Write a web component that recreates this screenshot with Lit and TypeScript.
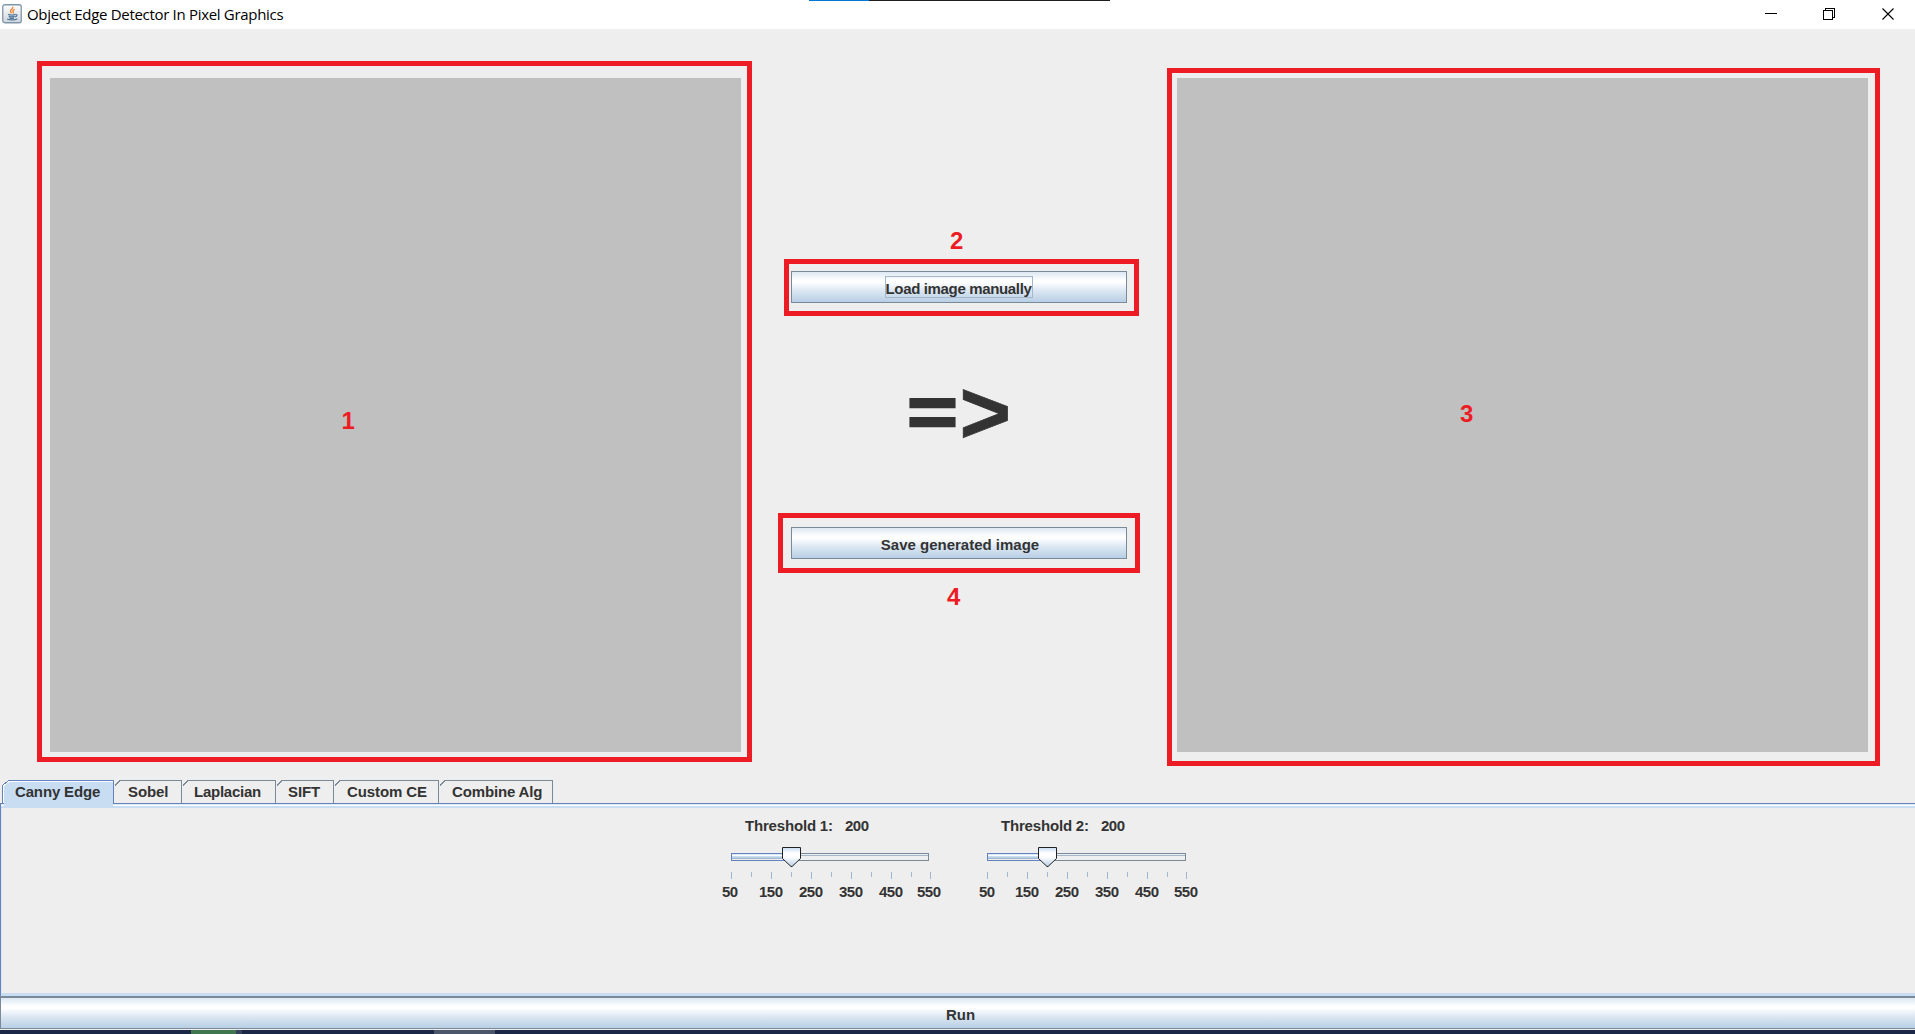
import { LitElement, html, css, svg } from "lit";
import { customElement, property } from "lit/decorators.js";
import { classMap } from "lit/directives/class-map.js";

const MAJOR = [50, 150, 250, 350, 450, 550];

@customElement("threshold-slider")
class ThresholdSlider extends LitElement {
  @property() label = "";
  @property({ type: Number }) value = 200;
  @property({ type: Number }) span = 198;
  @property({ type: Number }) nudge = 0;

  static styles = css`
    :host { display: block; width: 240px; }
    svg { display: block; overflow: visible; }
    text { font: bold 15px "Liberation Sans", Arial, sans-serif; fill: #333; white-space: pre; }
  `;

  render() {
    const x0 = 20;
    const xEnd = x0 + this.span;
    const last = x0 + 199;
    const at = (v: number) => (v === 550 ? last : x0 + ((v - 50) / 100) * 40);
    const labelAt = (v: number) => at(v) + (v === 550 || v === 50 ? this.nudge : 0);
    const t = x0 + 60.5;
    const ticks = Array.from({ length: 11 }, (_, i) => 50 + i * 50);
    return html`
      <svg width="240" height="100" viewBox="0 0 240 100" shape-rendering="crispEdges">
        <defs>
          <linearGradient id="thumb" x1="0" y1="0" x2="0" y2="1">
            <stop offset="0" stop-color="#c8ddf2" />
            <stop offset=".3" stop-color="#fff" />
            <stop offset=".5" stop-color="#fff" />
            <stop offset="1" stop-color="#b8cfe5" />
          </linearGradient>
        </defs>
        <text x="34" y="23" textLength="88">${this.label}:</text>
        <text x="134" y="23" textLength="24">${this.value}</text>
        <rect x="${x0 + 0.5}" y="45.5" width="${this.span - 1}" height="7" fill="#eee" stroke="#7a8a99" />
        <rect x="${x0 + 60}" y="47" width="${xEnd - x0 - 61}" height="1" fill="#a3b8cc" />
        <rect x="${x0 + 0.5}" y="45.5" width="60" height="7" fill="#eee" stroke="#6382bf" />
        <rect x="${x0 + 1}" y="46" width="58" height="1" fill="#dde8f3" />
        <rect x="${x0 + 1}" y="47" width="58" height="1" fill="#fff" />
        <rect x="${x0 + 1}" y="48" width="58" height="1" fill="#c8ddf2" />
        <rect x="${x0 + 1}" y="49" width="58" height="1" fill="#b8cfe5" />
        <rect x="${x0 + 1}" y="50" width="58" height="1" fill="#a3b8cc" />
        <path
          d="M${t - 9} 39.5H${t + 9}V50.500L${t + 0.5} 58.500H${t - 0.5}L${t - 9} 50.500Z"
          fill="url(#thumb)" stroke="#222" shape-rendering="auto" />
        ${ticks.map((v) => svg`<rect x="${at(v)}" y="64" width="1" height="${(v - 50) % 100 ? 5 : 7}" fill="#a3b8cc" />`)}
        ${MAJOR.map((v) => svg`<text x="${labelAt(v)}" y="89" text-anchor="middle" textLength="${v === 50 ? 16 : 24}">${v}</text>`)}
      </svg>
    `;
  }
}

@customElement("app-root")
class AppRoot extends LitElement {
  static styles = css`
    :host {
      display: flex; flex-direction: column; width: 1915px; height: 1034px; overflow: hidden;
      position: relative; background: #eee; color: #333;
      font: bold 15px/18px "Liberation Sans", Arial, sans-serif;
    }
    * { box-sizing: border-box; }
    .title { height: 29px; flex: none; background: #fff; display: flex; align-items: center; padding: 0 20px 2px 2px; color: #000; }
    .title span { font: 15px/20px "Open Sans", "Noto Sans", sans-serif; margin-left: 5px; flex: 1; letter-spacing: -0.31px; white-space: nowrap; }
    .title svg { flex: none; display: block; }
    .title .controls { margin-top: 1px; }
    .peek { position: absolute; top: 0; left: 809px; width: 301px; height: 1px; display: flex; background: #1f1f1f; }
    .peek i { width: 60px; background: #0078d7; }

    .work { height: 751px; flex: none; display: grid; grid-template-columns: 691px 436px 691px; padding: 49px 0 28px 50px; }
    .canvas { position: relative; background: #c0c0c0; }
    .mid { display: flex; flex-direction: column; align-items: center; padding-top: 193px; }
    .slot { position: relative; width: 336px; height: 32px; }
    .btn {
      display: flex; align-items: center; justify-content: center; width: 100%; height: 100%; margin: 0; padding: 3px 0 0 2px;
      border: 1px solid #7a8a99; border-radius: 0; color: #333; font: inherit; white-space: nowrap;
      background: linear-gradient(#dde8f3 0%, #fff 28%, #fff 34%, #dce7f2 62%, #b8cfe5 100%);
    }
    .focus {
      outline: 1px solid #a3b8cc; height: 20px; line-height: 20px; margin-top: -3px; padding-top: 2px; width: 146px;
      letter-spacing: -0.35px; margin-left: -3px;
    }
    .arrow { height: 224px; display: flex; align-items: center; font-size: 92px; line-height: 92px; padding-bottom: 4px; }
    .arrow span { display: block; }
    .eq { transform: translate(0.5px, -2px) scale(0.93, 0.77); -webkit-text-stroke: 3.500px #333; }
    .gt { transform: translate(-0.5px, -1px) scale(0.96, 0.970); -webkit-text-stroke: 0.800px #333; }
    .frame { position: absolute; border: 5px solid #ed1c24; pointer-events: none; }
    .num { position: absolute; color: #ed1c24; font-size: 24px; line-height: 24px; }
    .f1 { left: -13px; top: -17px; width: 715px; height: 701px; }
    .f2 { left: -7px; top: -12px; width: 355px; height: 57px; }
    .f3 { left: -10px; top: -10px; width: 713px; height: 698px; }
    .f4 { left: -13px; top: -14px; width: 362px; height: 60px; }
    .n1 { left: 291.500px; top: 331px; }
    .n2 { left: 159px; top: -42px; }
    .n3 { left: 283px; top: 324px; }
    .n4 { left: 156px; top: 58px; }

    .tabs { height: 23px; flex: none; display: flex; padding-left: 2px; }
    .tab { position: relative; height: 23px; }
    .tab svg { position: absolute; left: 0; top: 0; overflow: visible; }
    .tab span { position: relative; display: block; padding-top: 3px; white-space: nowrap; }
    .tab:first-child { z-index: 1; }

    .panel { flex: 1; min-height: 0; border-left: 1px solid #6382bf; border-top: 1px solid #6382bf; display: flex; flex-direction: column; }
    .lines { height: 4px; flex: none; background: linear-gradient(#dde8f3 1px, #fff 1px 2px, #c8ddf2 2px); }
    .body { flex: 1; border-left: 1px solid #dce6f2; border-bottom: 3px solid #c8ddf2; display: flex; padding-left: 709px; gap: 16px; }
    .run { height: 33px; flex: none; border-top: 2px solid #7a8a99; }
    .run.btn { padding: 3px 0 0 5px; border-right: 0; }
    .edge { height: 1px; flex: none; background: #eee; }
    .taskbar { height: 4px; flex: none; background: #1a2747; display: flex; padding-left: 191px; }
    .green { width: 45px; background: #3f7650; }
    .slate { width: 6px; background: #34405c; }
    .grey { width: 61px; margin-left: 192px; background: #4b556b; }
  `;

  /* name, tab width, text inset, letter spacing */
  private tabs: [string, number, number, number][] = [
    ["Canny Edge", 112, 13, -0.15],
    ["Sobel", 68, 14, -0.1],
    ["Laplacian", 94, 12, -0.25],
    ["SIFT", 58, 12, -0.1],
    ["Custom CE", 105, 13, -0.1],
    ["Combine Alg", 114, 13, -0.15],
  ];

  private tab([name, w, inset, spacing]: [string, number, number, number], i: number) {
    const on = i === 0;
    return html`
      <div class=${classMap({ tab: true, on })} style="width:${w}px">
        <svg width=${w} height="28" shape-rendering="crispEdges">
          ${on
            ? svg`
              <path d="M2 28V5L7 1H${w - 1}V28Z" fill="#c8ddf2" />
              <path d="M1.5 23V6L7 1.5H${w - 1}" fill="none" stroke="#fff" />
              <path d="M.5 23V5.5L6.5 .5H${w - 0.5}V23" fill="none" stroke="#6382bf" />`
            : svg`<path d="M1 5.500L6 .5H${w - 0.5}V23" fill="none" stroke="#7a8a99" />`}
        </svg>
        <span style="padding-left:${inset}px;letter-spacing:${spacing}px">${name}</span>
      </div>
    `;
  }

  render() {
    return html`
      <div class="title">
        <svg width="20" height="20" viewBox="0 0 20 20">
          <defs>
            <linearGradient id="ic" x1="0" y1="0" x2="0" y2="1">
              <stop offset="0" stop-color="#fdfdfd" />
              <stop offset="1" stop-color="#cfd6dc" />
            </linearGradient>
          </defs>
          <rect x=".75" y=".75" width="18.5" height="18" rx="2" fill="url(#ic)" stroke="#7f95a8" stroke-width="1.3" />
          <path d="M10.8 2.8c.8 2-3 2.8-2.300 4.700.2.700.900 1.200 1.100 1.800M12.700 5.300c-2 .800-2.200 1.700-1.500 2.500.4.500.2 1-.2 1.500" fill="none" stroke="#e8842c" stroke-width="1.300" />
          <path d="M6 10.400c2 .7 5.500.7 7.300 0M6.700 12.400c1.900.6 4.100.6 6 0M13.500 10.600c2-.5 2 1.700-.4 2.300M5 15c2.800 1.200 8 1.200 10.500-.3M7.500 14.200c1.400.3 3 .3 4.500 0" fill="none" stroke="#557a9c" stroke-width="1.200" />
        </svg>
        <span>Object Edge Detector In Pixel Graphics</span>
        <svg class="controls" width="130" height="14" viewBox="0 0 130 14" fill="none" stroke="#000" shape-rendering="crispEdges">
          <path d="M0 6.500h12M58.500 3.500h9v9h-9zM60.500 3.500v-2h9v9h-2" />
          <path d="M117.500 1.500l11 11M128.500 1.500l-11 11" shape-rendering="auto" stroke-width="1.100" />
        </svg>
      </div>
      <div class="peek"><i></i></div>

      <div class="work">
        <div class="canvas"><div class="frame f1"></div><div class="num n1">1</div></div>
        <div class="mid">
          <div class="slot">
            <button class="btn"><span class="focus">Load image manually</span></button>
            <div class="frame f2"></div><div class="num n2">2</div>
          </div>
          <div class="arrow"><span class="eq">=</span><span class="gt">&gt;</span></div>
          <div class="slot">
            <button class="btn">Save generated image</button>
            <div class="frame f4"></div><div class="num n4">4</div>
          </div>
        </div>
        <div class="canvas"><div class="frame f3"></div><div class="num n3">3</div></div>
      </div>

      <div class="tabs">${this.tabs.map((t, i) => this.tab(t, i))}</div>
      <div class="panel">
        <div class="lines"></div>
        <div class="body">
          <threshold-slider label="Threshold 1" .span=${198} .nudge=${-1}></threshold-slider>
          <threshold-slider label="Threshold 2" .span=${199} .nudge=${0}></threshold-slider>
        </div>
      </div>
      <button class="btn run">Run</button>
      <div class="edge"></div>
      <div class="taskbar"><div class="green"></div><div class="slate"></div><div class="grey"></div></div>
    `;
  }
}
